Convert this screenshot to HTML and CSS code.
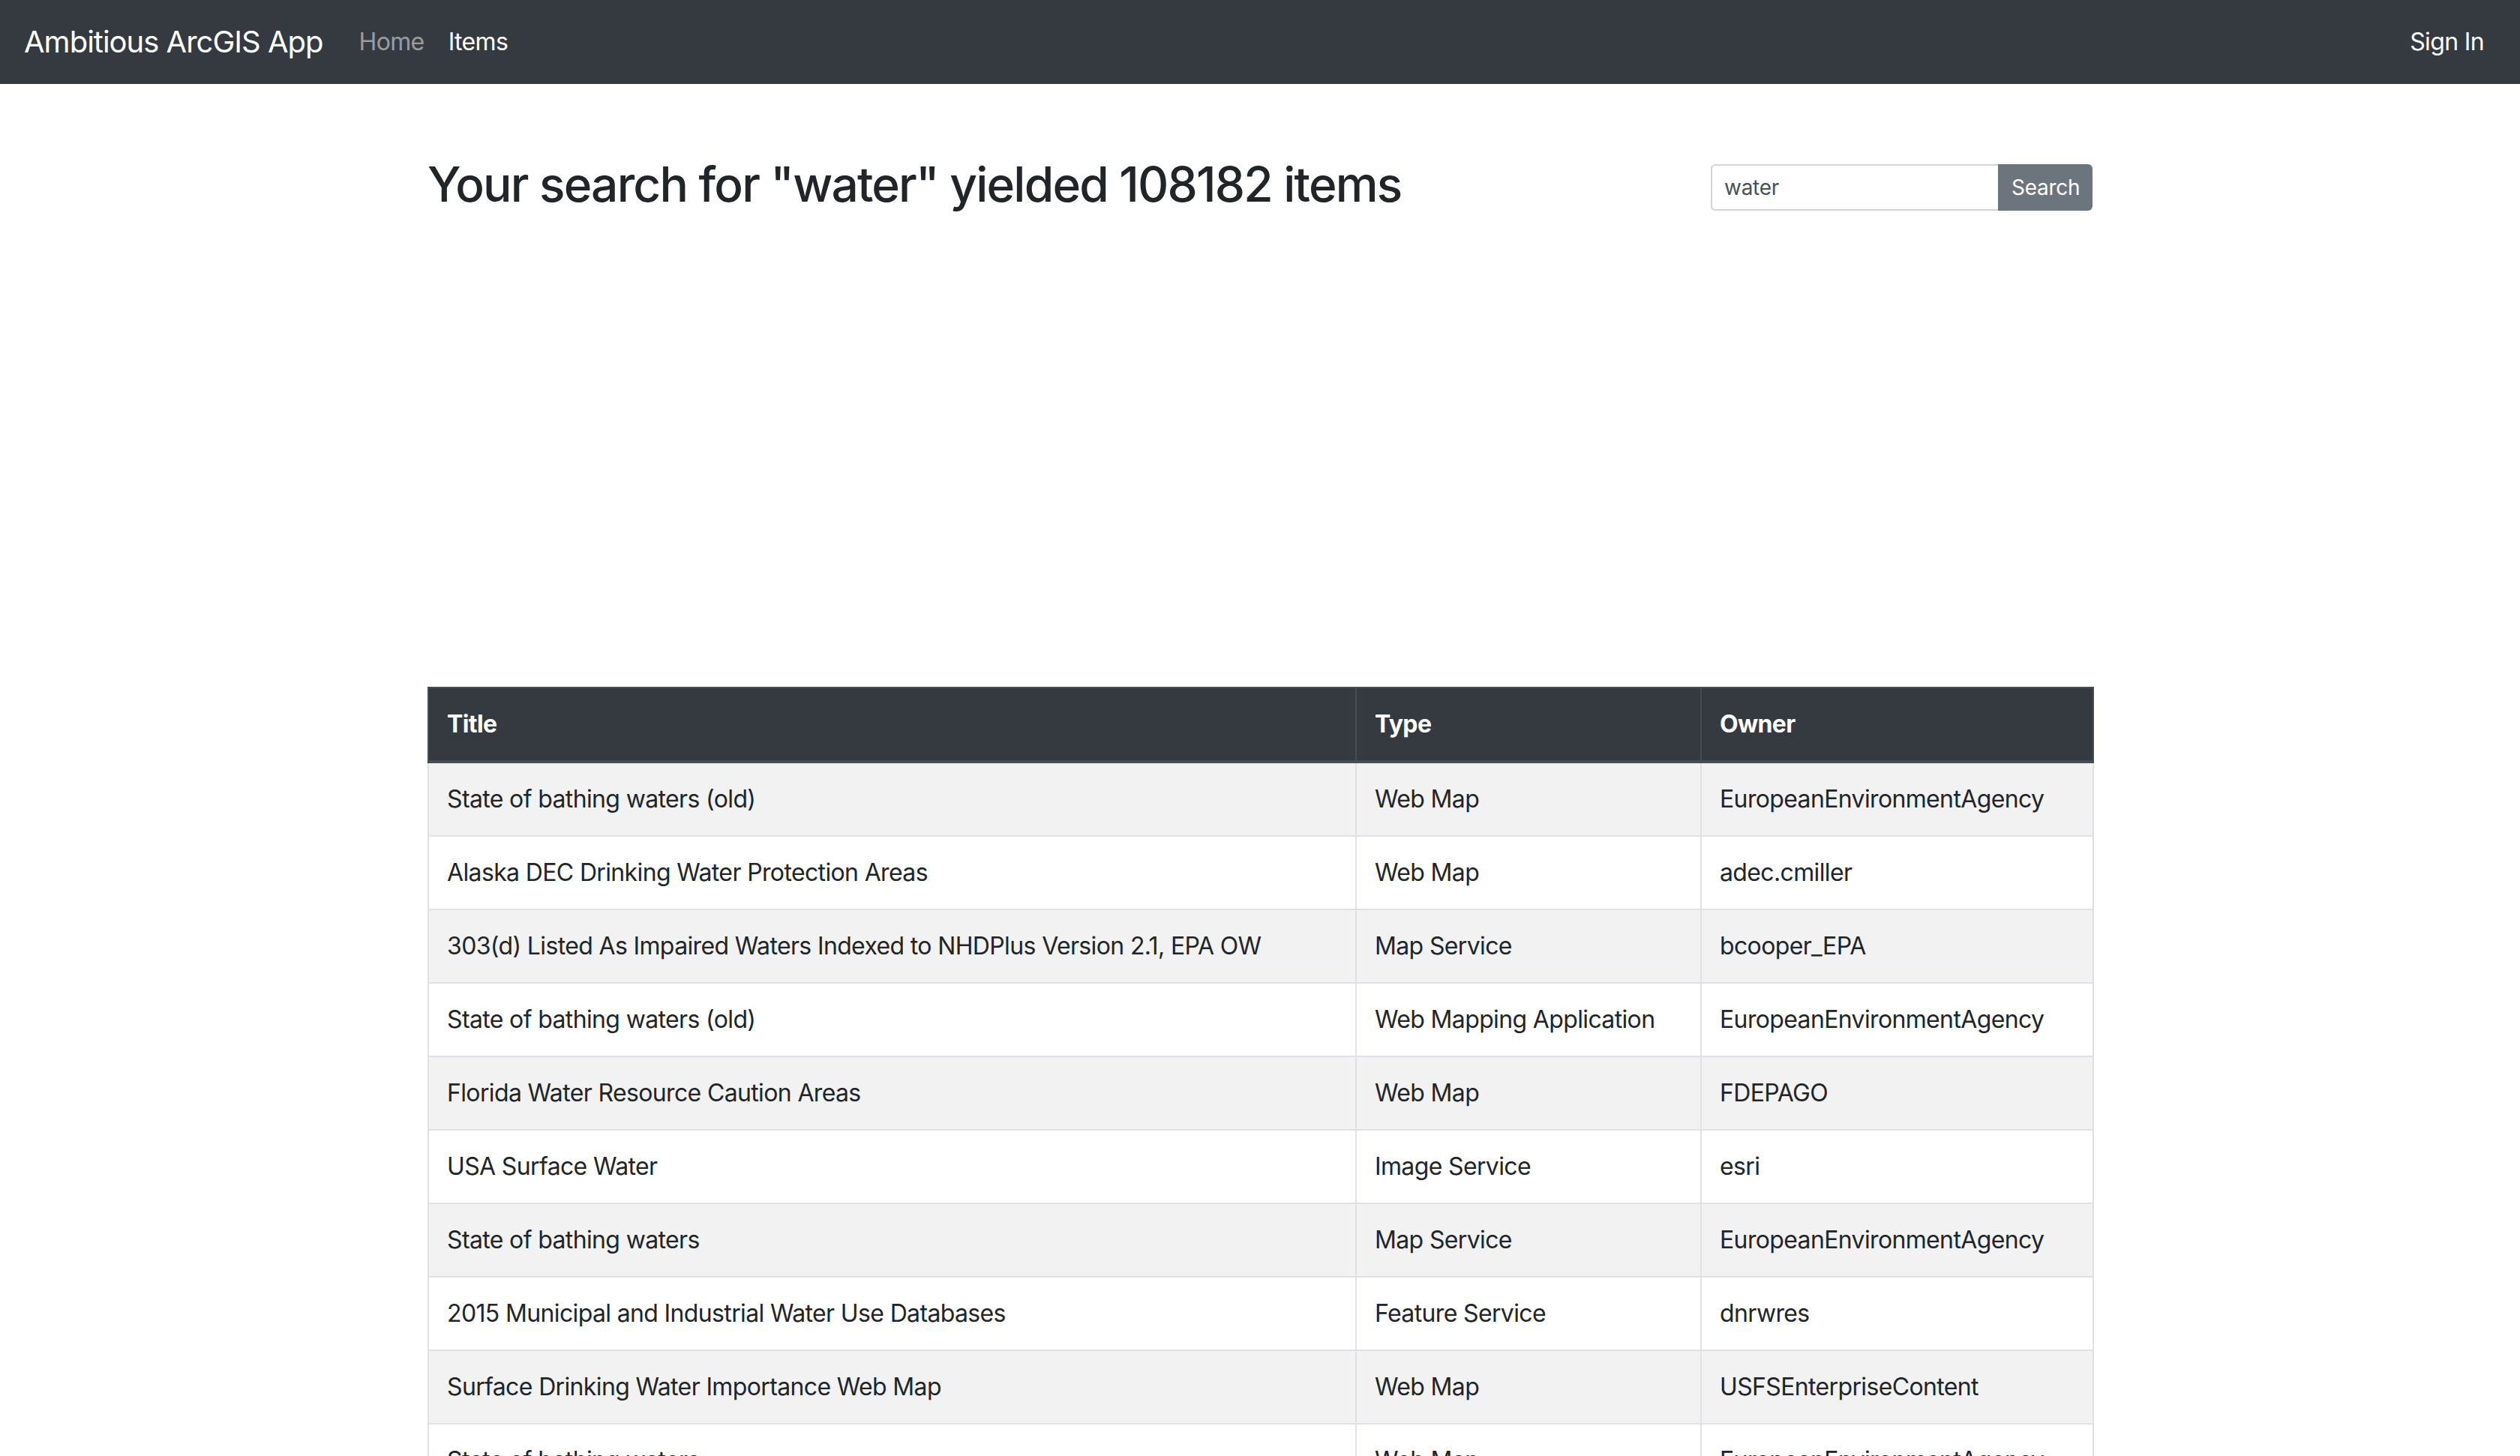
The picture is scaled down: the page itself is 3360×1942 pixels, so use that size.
FILE: index.html
```html
<!DOCTYPE html>
<html lang="en">
<head>
<meta charset="utf-8">
<title>Ambitious ArcGIS App</title>
<link rel="stylesheet" href="styles.css">
</head>
<body>
<nav class="navbar">
  <a class="brand" href="#">Ambitious ArcGIS App</a>
  <ul class="nav">
    <li><a class="nav-link" href="#">Home</a></li>
    <li><a class="nav-link active" href="#">Items</a></li>
  </ul>
  <a class="nav-link signin" href="#">Sign In</a>
</nav>
<main class="container">
  <div class="head-row">
    <h2 class="title">Your search for "water" yielded 108182 items</h2>
    <form class="search">
      <input class="search-input" type="text" value="water">
      <button class="search-btn" type="button">Search</button>
    </form>
  </div>
  <div class="map"></div>
  <table class="items">
    <colgroup>
      <col class="c-title">
      <col class="c-type">
      <col class="c-owner">
    </colgroup>
    <thead>
      <tr><th>Title</th><th>Type</th><th>Owner</th></tr>
    </thead>
    <tbody>
      <tr><td>State of bathing waters (old)</td><td>Web Map</td><td>EuropeanEnvironmentAgency</td></tr>
      <tr><td>Alaska DEC Drinking Water Protection Areas</td><td>Web Map</td><td>adec.cmiller</td></tr>
      <tr><td>303(d) Listed As Impaired Waters Indexed to NHDPlus Version 2.1, EPA OW</td><td>Map Service</td><td>bcooper_EPA</td></tr>
      <tr><td>State of bathing waters (old)</td><td>Web Mapping Application</td><td>EuropeanEnvironmentAgency</td></tr>
      <tr><td>Florida Water Resource Caution Areas</td><td>Web Map</td><td>FDEPAGO</td></tr>
      <tr><td>USA Surface Water</td><td>Image Service</td><td>esri</td></tr>
      <tr><td>State of bathing waters</td><td>Map Service</td><td>EuropeanEnvironmentAgency</td></tr>
      <tr><td>2015 Municipal and Industrial Water Use Databases</td><td>Feature Service</td><td>dnrwres</td></tr>
      <tr><td>Surface Drinking Water Importance Web Map</td><td>Web Map</td><td>USFSEnterpriseContent</td></tr>
      <tr><td>State of bathing waters</td><td>Web Map</td><td>EuropeanEnvironmentAgency</td></tr>
    </tbody>
  </table>
</main>
</body>
</html>
```
FILE: styles.css
```css
* { box-sizing: border-box; }
html, body {
  margin: 0;
  padding: 0;
}
body {
  font-family: Inter, "Liberation Sans", Arial, sans-serif;
  font-size: 32px;
  line-height: 1.5;
  letter-spacing: -0.02em;
  color: #212529;
  background: #fff;
}
a { text-decoration: none; }

.navbar {
  display: flex;
  align-items: center;
  background: #343a40;
  padding: 16px 32px;
  height: 112px;
}
.brand {
  color: #fff;
  font-size: 40px;
  line-height: 1.5;
  letter-spacing: -0.025em;
  padding: 10px 0;
  margin-right: 32px;
}
.nav {
  display: flex;
  list-style: none;
  margin: 0;
  padding: 0;
  flex: 1;
}
.nav-link {
  display: block;
  padding: 16px 16px;
  color: rgba(255,255,255,.5);
  font-size: 32px;
  line-height: 1.5;
}
.nav-link.active,
.nav-link.signin { color: #fff; }

.container {
  width: 2280px;
  margin: 0 auto;
  padding: 0 30px;
}
.head-row {
  display: flex;
  justify-content: space-between;
  align-items: flex-start;
  margin-top: 96px;
}
.title {
  margin: 0 0 16px;
  font-size: 64px;
  font-weight: 500;
  line-height: 1.2;
  letter-spacing: -0.028em;
}
.search {
  display: flex;
  margin-top: 11px;
}
.search-input {
  width: 383px;
  height: 62px;
  padding: 8px 16px;
  font: inherit;
  font-size: 28px;
  line-height: 1.5;
  letter-spacing: -0.01em;
  color: #495057;
  border: 2px solid #ced4da;
  border-right: none;
  border-radius: 6px 0 0 6px;
  outline: none;
}
.search-btn {
  width: 126px;
  height: 62px;
  font: inherit;
  font-size: 28px;
  line-height: 1.5;
  letter-spacing: -0.01em;
  color: #fff;
  background: #6c757d;
  border: 2px solid #6c757d;
  border-radius: 0 6px 6px 0;
  padding: 8px 16px;
}
.map {
  height: 600px;
  margin-bottom: 15px;
}

.items {
  width: 2220px;
  border-collapse: collapse;
  table-layout: fixed;
  border: 2px solid #dee2e6;
}
.c-title { width: 1237px; }
.c-type { width: 460px; }
.c-owner { width: 523px; }
.items th,
.items td {
  padding: 24px;
  border: 2px solid #dee2e6;
  text-align: left;
  vertical-align: top;
  white-space: nowrap;
}
.items thead th {
  background: #343a40;
  color: #fff;
  border-color: #454d55;
  border-bottom-width: 4px;
  font-weight: 700;
  vertical-align: bottom;
}
.items tbody tr:nth-child(odd) { background: #f2f2f2; }
```
